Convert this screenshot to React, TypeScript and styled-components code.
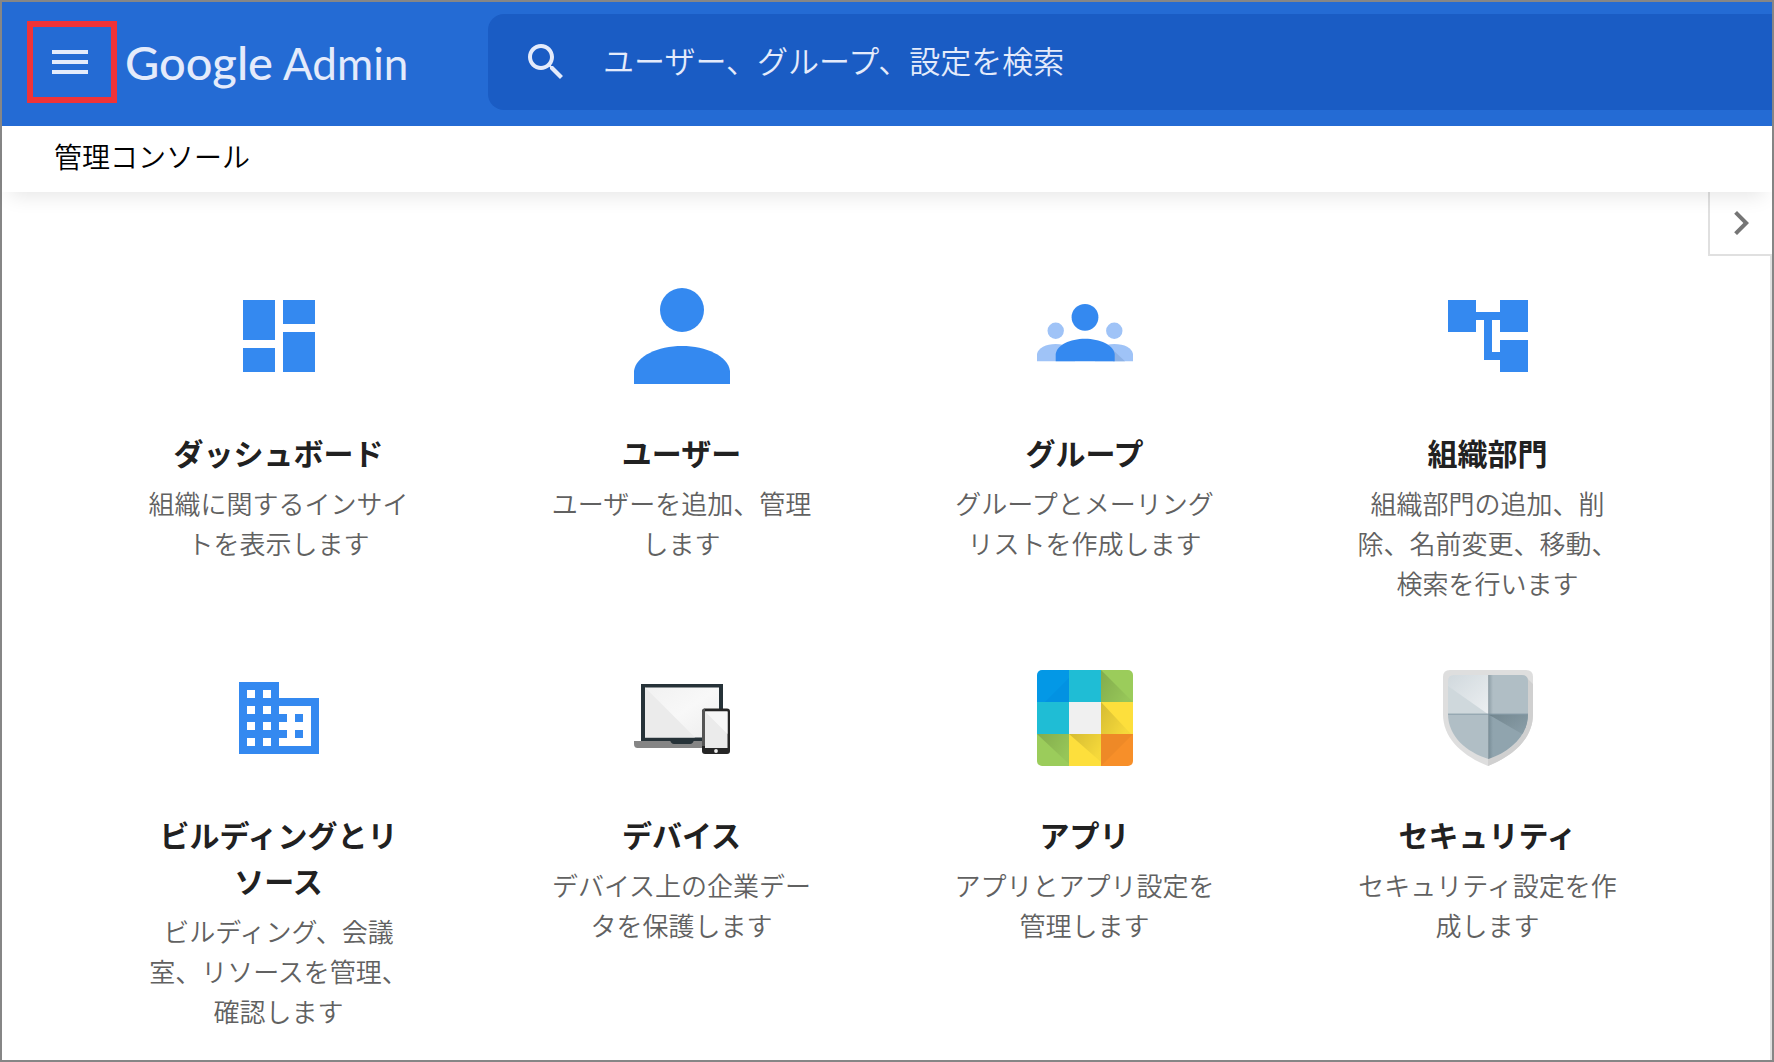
import React from "react";
import styled, { createGlobalStyle } from "styled-components";

const GlobalStyle = createGlobalStyle`
  *, *::before, *::after { box-sizing: border-box; }
  body {
    margin: 0;
    background: #fff;
    font-family: "Noto Sans CJK JP", sans-serif;
  }
`;

const Frame = styled.div`
  display: flex;
  flex-direction: column;
  min-height: 100vh;
  border: 2px solid #868686;
`;

const TopBar = styled.header`
  display: flex;
  align-items: center;
  height: 124px;
  padding: 12px 0 16px 25px;
  background: #246bd4;
  color: #e4ebfb;
`;

const MenuButton = styled.button`
  display: flex;
  align-items: center;
  height: 82px;
  padding: 0 17px 0 13px;
  border: 6px solid #f03337;
  background: none;
  color: inherit;
  cursor: pointer;
`;

const Brand = styled.a`
  display: flex;
  align-items: baseline;
  gap: 10px;
  width: 371px;
  padding-left: 8px;
  color: inherit;
  font-family: Lato, sans-serif;
  line-height: 64px;
  text-decoration: none;
`;

const BrandName = styled.span`
  font-size: 47px;
  font-weight: 500;
`;

const BrandProduct = styled.span`
  font-size: 44px;
`;

const SearchBox = styled.label`
  display: flex;
  flex: 1;
  align-items: center;
  gap: 33px;
  height: 96px;
  padding-left: 34px;
  border-radius: 16px 0 0 16px;
  background: #1a5cc4;
`;

const SearchInput = styled.input`
  flex: 1;
  min-width: 0;
  padding: 0 0 4px;
  border: 0;
  outline: 0;
  background: none;
  color: inherit;
  font-family: inherit;
  font-size: 31px;
  font-weight: 350;
  line-height: 48px;

  &::placeholder {
    color: #e4ebfb;
    opacity: 1;
  }
`;

const TitleBar = styled.div`
  position: relative;
  z-index: 1;
  height: 66px;
  padding: 7px 52px;
  background: #fff;
  box-shadow: 0 12px 20px -8px rgba(0, 0, 0, 0.1);
`;

const PageTitle = styled.h1`
  margin: 0;
  color: #000;
  font-size: 28px;
  font-weight: 350;
  line-height: 46px;
`;

const Content = styled.main`
  display: flex;
  flex: 1;
`;

const CardGrid = styled.div`
  display: grid;
  flex: 1;
  grid-template-columns: repeat(4, 1fr);
  row-gap: 65px;
  align-content: start;
  padding: 96px 19px 24px 75px;
`;

const Card = styled.a`
  display: flex;
  flex-direction: column;
  align-items: center;
  padding: 0 70px;
  color: inherit;
  text-align: center;
  text-decoration: none;
`;

const CardTitle = styled.h2`
  margin: 45px 0 8px;
  color: #212121;
  font-size: 30px;
  font-weight: 700;
  line-height: 46px;
`;

const CardText = styled.p`
  margin: 0 0 2px;
  color: #616161;
  font-size: 26px;
  font-weight: 350;
  line-height: 40px;
`;

const SideRail = styled.aside`
  display: flex;
  flex-direction: column;
  width: 64px;
`;

const RailToggle = styled.button`
  display: flex;
  align-items: center;
  justify-content: center;
  height: 64px;
  padding: 0;
  border: solid #e0e0e0;
  border-width: 0 0 2px 2px;
  background: #fff;
  color: #757575;
  cursor: pointer;
`;

const RailEdge = styled.div`
  flex: 1;
  border-right: 2px solid #e0e0e0;
`;

const Glyph = ({ d, size, color = "currentColor" }: { d: string; size: number; color?: string }) => (
  <svg width={size} height={size} viewBox="0 0 24 24" fill={color} aria-hidden="true">
    <path d={d} />
  </svg>
);

const Art = ({ children }: { children: React.ReactNode }) => (
  <svg width={96} height={96} viewBox="0 0 96 96" aria-hidden="true">
    {children}
  </svg>
);

const BLUE = "#3489f0";

const UserArt = () => (
  <Art>
    <g fill={BLUE}>
      <circle cx="48" cy="22" r="22" />
      <path d="M0 96V83C2 68 24 58 48 58s46 10 48 25v13z" />
    </g>
  </Art>
);

const GroupArt = () => (
  <Art>
    <g fill="#9fc3f7">
      <circle cx="18.7" cy="42.7" r="8.2" />
      <circle cx="77.3" cy="42.7" r="8.2" />
      <path d="M0 73.3V66C1 60 9 56 18.7 56S37 60 38 66v7.3z" />
      <path d="M58 73.3V66c1-6 9-10 19.3-10S95 60 96 66v7.3z" />
    </g>
    <path d="M76 62l12 11.3H76z" fill="#8db2e6" />
    <g fill={BLUE}>
      <circle cx="48" cy="29.3" r="13.4" />
      <path d="M18.7 73.3V66C20 57 33 50.7 48 50.7S76.4 57 77.7 66v7.3z" />
    </g>
  </Art>
);

const DevicesArt = () => (
  <Art>
    <defs>
      <linearGradient id="screenShine" x1="0" y1="0" x2="1" y2="1">
        <stop offset="0" stopColor="#f1f1f1" />
        <stop offset="0.5" stopColor="#f8f8f8" />
        <stop offset="1" stopColor="#ededed" />
      </linearGradient>
    </defs>
    <path d="M0 71h72v7H3.5Q0 78 0 74z" fill="#858585" />
    <rect x="7" y="14" width="82" height="57" fill="#263238" />
    <path d="M36 70h24q-1 4-4 4H40q-3 0-4-4z" fill="#263238" />
    <rect x="11" y="17.5" width="74" height="50" fill="url(#screenShine)" />
    <path d="M11 17.5l50 50H11z" fill="#ebebeb" />
    <rect x="68" y="38.5" width="28" height="45.5" rx="3" fill="#262626" />
    <path d="M68 42q0-3.5 3-3.500V76h-3z" fill="#555" />
    <rect x="71" y="41.5" width="22.5" height="36.5" fill="#ebebeb" />
    <path d="M71 41.5h22.5v22.5z" fill="#f7f7f7" />
    <circle cx="82" cy="81" r="1.9" fill="#eee" />
  </Art>
);

const AppsArt = () => (
  <Art>
    <defs>
      <clipPath id="appsClip">
        <rect width="96" height="96" rx="5" />
      </clipPath>
      <linearGradient id="tileShade" x1="0" y1="0" x2="1" y2="0.6">
        <stop offset="0" stopColor="#000" stopOpacity="0.16" />
        <stop offset="1" stopColor="#000" stopOpacity="0.03" />
      </linearGradient>
    </defs>
    <g clipPath="url(#appsClip)">
      <rect width="32" height="32" fill="#0398e6" />
      <rect x="32" width="32" height="32" fill="#1fbdd5" />
      <rect x="64" width="32" height="32" fill="#9bcc5b" />
      <rect y="32" width="32" height="32" fill="#1fbdd5" />
      <rect x="32" y="32" width="32" height="32" fill="#f0f0f0" />
      <rect x="64" y="32" width="32" height="32" fill="#fddf3c" />
      <rect y="64" width="32" height="32" fill="#9bcc5b" />
      <rect x="32" y="64" width="32" height="32" fill="#fddf3c" />
      <rect x="64" y="64" width="32" height="32" fill="#f78f29" />
      <path d="M32 8v24H8z" fill="#0389db" opacity="0.4" />
      <path d="M64 0l32 32H64z" fill="url(#tileShade)" />
      <path d="M64 32l30 32H64z" fill="url(#tileShade)" />
      <path d="M0 64h32v30z" fill="url(#tileShade)" />
      <path d="M32 64h32v28z" fill="url(#tileShade)" />
      <path d="M64 64h32L64 96z" fill="#e58325" opacity="0.5" />
    </g>
  </Art>
);

const ShieldArt = () => (
  <Art>
    <defs>
      <clipPath id="shieldClip">
        <path d="M14 5h68q6 0 6 6v33C88 66 70 82 48.5 89 26 82 8 66 8 44V11q0-6 6-6z" />
      </clipPath>
      <linearGradient id="shieldLight" x1="0" y1="0" x2="1" y2="1">
        <stop offset="0" stopColor="#ccd5da" />
        <stop offset="1" stopColor="#eceff1" />
      </linearGradient>
      <linearGradient id="shieldShade" x1="0" y1="0" x2="1" y2="0.8">
        <stop offset="0" stopColor="#72868f" />
        <stop offset="1" stopColor="#8fa3ad" />
      </linearGradient>
      <linearGradient id="seam" x1="0" y1="0" x2="1" y2="0">
        <stop offset="0" stopColor="#455a64" stopOpacity="0.35" />
        <stop offset="1" stopColor="#455a64" stopOpacity="0" />
      </linearGradient>
    </defs>
    <path d="M10 0h76q7 0 7 7v37c0 25-20 42-45 52C23 86 3 69 3 44V7q0-7 7-7z" fill="#dedede" />
    <path d="M86 7l7 7v30c0 25-20 42-45 52v-7c23-7 40-23 40-45z" fill="#d0d0d0" />
    <g clipPath="url(#shieldClip)">
      <rect width="48.5" height="44.5" fill="url(#shieldLight)" />
      <path d="M8 16l40.5 28.5H8z" fill="#cfd8dc" />
      <rect x="48.5" width="48" height="44.5" fill="#b0bec5" />
      <rect y="44.5" width="48.5" height="52" fill="#b0bec5" />
      <rect x="48.5" y="44.5" width="48" height="52" fill="#90a4ae" />
      <path d="M48.5 44.5H96V72z" fill="url(#shieldShade)" />
      <rect x="48" width="5" height="96" fill="url(#seam)" />
      <rect y="43.5" width="96" height="1.5" fill="#78909c" opacity="0.6" />
    </g>
  </Art>
);

const cards = [
  {
    title: "ダッシュボード",
    text: "組織に関するインサイトを表示します",
    icon: <Glyph size={96} color={BLUE} d="M3 13h8V3H3v10zm0 8h8v-6H3v6zm10 0h8V11h-8v10zm0-18v6h8V3h-8z" />,
  },
  { title: "ユーザー", text: "ユーザーを追加、管理します", icon: <UserArt /> },
  { title: "グループ", text: "グループとメーリングリストを作成します", icon: <GroupArt /> },
  {
    title: "組織部門",
    text: "組織部門の追加、削除、名前変更、移動、検索を行います",
    icon: <Glyph size={96} color={BLUE} d="M22 11V3h-7v3H9V3H2v8h7V8h2v10h4v3h7v-8h-7v3h-2V8h2v3z" />,
  },
  {
    title: "ビルディングとリソース",
    text: "ビルディング、会議室、リソースを管理、確認します",
    icon: (
      <Glyph
        size={96}
        color={BLUE}
        d="M12 7V3H2v18h20V7H12zM6 19H4v-2h2v2zm0-4H4v-2h2v2zm0-4H4V9h2v2zm0-4H4V5h2v2zm4 12H8v-2h2v2zm0-4H8v-2h2v2zm0-4H8V9h2v2zm0-4H8V5h2v2zm10 12h-8v-2h2v-2h-2v-2h2v-2h-2V9h8v10zm-2-8h-2v2h2v-2zm0 4h-2v2h2v-2z"
      />
    ),
  },
  { title: "デバイス", text: "デバイス上の企業データを保護します", icon: <DevicesArt /> },
  { title: "アプリ", text: "アプリとアプリ設定を管理します", icon: <AppsArt /> },
  { title: "セキュリティ", text: "セキュリティ設定を作成します", icon: <ShieldArt /> },
];

export default function App() {
  return (
    <>
      <GlobalStyle />
      <Frame lang="ja">
        <TopBar>
          <MenuButton type="button" aria-label="メニュー">
            <Glyph size={48} d="M3 18h18v-2H3v2zm0-5h18v-2H3v2zm0-7v2h18V6H3z" />
          </MenuButton>
          <Brand href="#">
            <BrandName>Google</BrandName>
            <BrandProduct>Admin</BrandProduct>
          </Brand>
          <SearchBox>
            <Glyph
              size={48}
              d="M15.5 14h-.79l-.28-.27C15.41 12.59 16 11.11 16 9.5 16 5.91 13.09 3 9.5 3S3 5.91 3 9.5 5.91 16 9.5 16c1.61 0 3.09-.59 4.23-1.57l.27.28v.79l5 4.99L20.49 19l-4.99-5zm-6 0C7.01 14 5 11.99 5 9.5S7.01 5 9.5 5 14 7.01 14 9.5 11.99 14 9.5 14z"
            />
            <SearchInput type="text" placeholder="ユーザー、グループ、設定を検索" aria-label="検索" />
          </SearchBox>
        </TopBar>
        <TitleBar>
          <PageTitle>管理コンソール</PageTitle>
        </TitleBar>
        <Content>
          <CardGrid>
            {cards.map((card) => (
              <Card href="#" key={card.title}>
                {card.icon}
                <CardTitle>{card.title}</CardTitle>
                <CardText>{card.text}</CardText>
              </Card>
            ))}
          </CardGrid>
          <SideRail>
            <RailToggle type="button" aria-label="パネルを開く">
              <Glyph size={48} d="M10 6L8.59 7.41 13.17 12l-4.58 4.59L10 18l6-6z" />
            </RailToggle>
            <RailEdge />
          </SideRail>
        </Content>
      </Frame>
    </>
  );
}
